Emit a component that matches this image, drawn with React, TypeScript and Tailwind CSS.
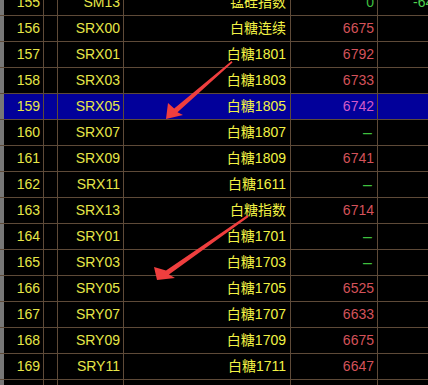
type Row = { no: string; code: string; name: string; price: string; change?: string; pc?: string };

const rows: Row[] = [
  { no: "155", code: "SM13", name: "锰硅指数", price: "0", change: "-64", pc: "green" },
  { no: "156", code: "SRX00", name: "白糖连续", price: "6675" },
  { no: "157", code: "SRX01", name: "白糖1801", price: "6792" },
  { no: "158", code: "SRX03", name: "白糖1803", price: "6733" },
  { no: "159", code: "SRX05", name: "白糖1805", price: "6742" },
  { no: "160", code: "SRX07", name: "白糖1807", price: "–" },
  { no: "161", code: "SRX09", name: "白糖1809", price: "6741" },
  { no: "162", code: "SRX11", name: "白糖1611", price: "–" },
  { no: "163", code: "SRX13", name: "白糖指数", price: "6714" },
  { no: "164", code: "SRY01", name: "白糖1701", price: "–" },
  { no: "165", code: "SRY03", name: "白糖1703", price: "–" },
  { no: "166", code: "SRY05", name: "白糖1705", price: "6525" },
  { no: "167", code: "SRY07", name: "白糖1707", price: "6633" },
  { no: "168", code: "SRY09", name: "白糖1709", price: "6675" },
  { no: "169", code: "SRY11", name: "白糖1711", price: "6647" },
  { no: "", code: "", name: "", price: "" },
];

function priceColor(r: Row, sel: boolean) {
  if (r.price === "–") return "text-[#3fbf3f] pr-[5px] text-[16px]";
  if (r.pc === "green") return "text-[#3fbf3f] pr-[3px]";
  if (sel) return "text-[#d25ac8] pr-[3px]";
  return "text-[#d4525a] pr-[3px]";
}

export default function App() {
  return (
    <div className="relative w-[428px] h-[385px] overflow-hidden bg-black font-['Liberation_Sans','Noto_Sans_CJK_SC',sans-serif] text-[14px] text-[#e6e648]">
      <div className="-mt-[10px] flex flex-col">
        {rows.map((r) => {
          const sel = r.no === "159";
          return (
            <div
              key={r.no + r.code}
              className={`flex h-[26px] shrink-0 border-b border-[#5e4a38] ${sel ? "bg-[#02009a]" : ""}`}
            >
              <div className="w-[4px] shrink-0 bg-[#777777]" />
              <div className="flex w-[40px] shrink-0 items-center justify-end border-r border-[#5e4a38] pr-[3px]">{r.no}</div>
              <div className="w-[14px] shrink-0 border-r border-[#5e4a38]" />
              <div className="flex w-[66px] shrink-0 items-center justify-end border-r border-[#5e4a38] pr-[3px]">{r.code}</div>
              <div className="flex w-[167px] shrink-0 items-center justify-end border-r border-[#5e4a38] pr-[4px] text-[#f2f244]">{r.name}</div>
              <div className={`flex w-[87px] shrink-0 items-center justify-end border-r border-[#5e4a38] ${priceColor(r, sel)}`}>
                {r.price}
              </div>
              <div className="flex w-[90px] shrink-0 items-center pl-[35px] text-[#4fd04f]">{r.change}</div>
            </div>
          );
        })}
      </div>
      <svg className="pointer-events-none absolute left-0 top-0" width="428" height="385">
        <path d="M166 119 L168 103 L174.2 108.5 L231.5 61 L232.5 62.5 L177.5 112.3 L183 115 Z" fill="#ef3e3e" />
        <path d="M157 280 L154 267 L166 270.5 L247.5 215 L248.5 217 L169 274.5 L175 278 Z" fill="#ef3e3e" />
      </svg>
    </div>
  );
}
